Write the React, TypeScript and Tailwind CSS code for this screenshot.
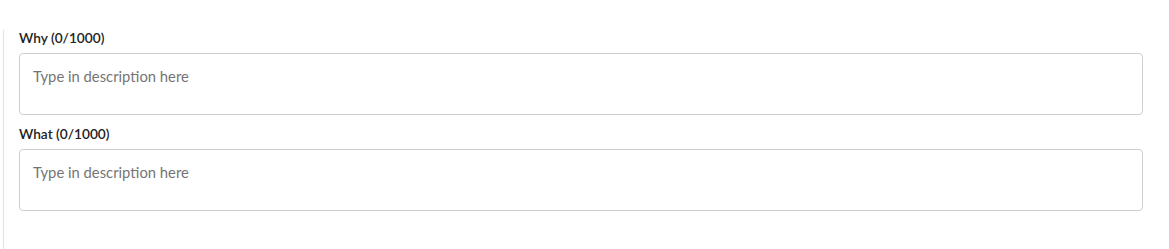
import { useState } from "react"

function Field({ label }: { label: string }) {
  const [value, setValue] = useState("")
  return (
    <div className="flex flex-col">
      <label className="text-[13.7px] leading-[16px] font-semibold text-[#222] mb-[7px]">
        {label} ({value.length}/1000)
      </label>
      <textarea
        value={value}
        maxLength={1000}
        onChange={(e) => setValue(e.target.value)}
        placeholder="Type in description here"
        className="h-[62px] w-full resize-none rounded-[4px] border border-[#cfcfcf] bg-white px-[13px] py-[12px] text-[14.8px] leading-[20px] text-[#333] placeholder:text-[#757575] outline-none"
      />
    </div>
  )
}

export default function App() {
  return (
    <div className="min-h-[249px] bg-white pt-[30px] pl-[3px] pr-[26px]" style={{ fontFamily: "Lato, 'Open Sans', sans-serif" }}>
      <div className="border-l border-[#e2e2e2] pl-[15px] min-h-[219px] flex flex-col gap-[11px]">
        <Field label="Why" />
        <Field label="What" />
      </div>
    </div>
  )
}
